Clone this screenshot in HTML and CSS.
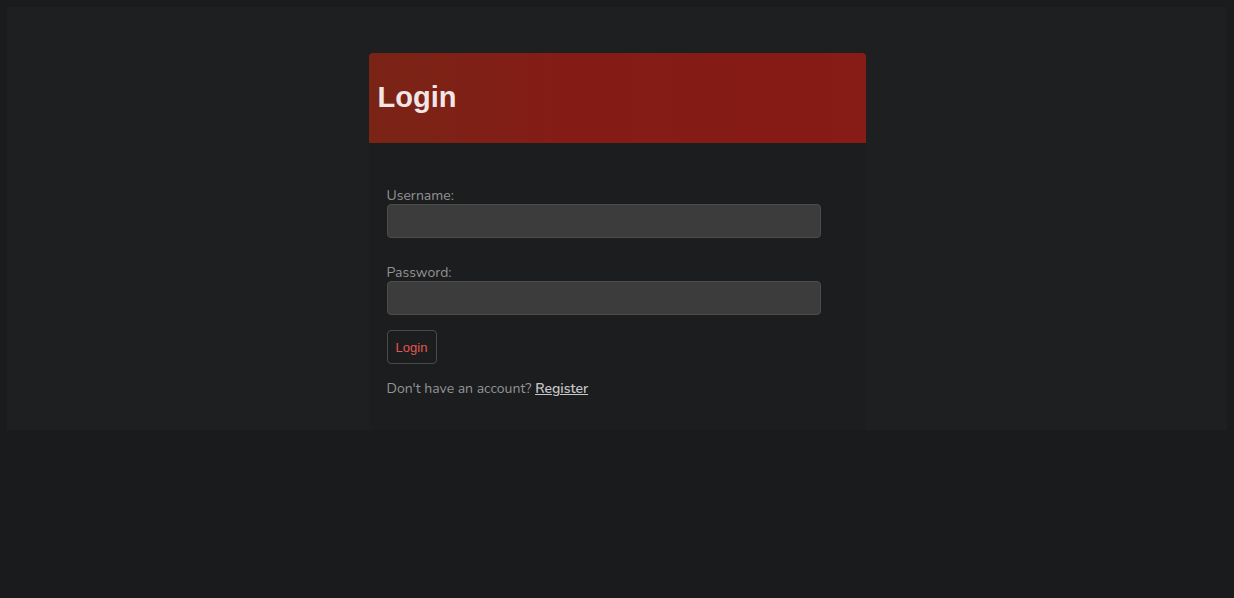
FILE: index.html
```html
<!DOCTYPE html>
<html>
<head>
<meta charset="utf-8">
<link rel="stylesheet" href="styles.css">
</head>
<body>
<div class="page">
  <div class="card">
    <div class="card-header"><h1>Login</h1></div>
    <form class="card-body">
      <div class="field">
        <label>Username:</label>
        <input type="text" class="input">
      </div>
      <div class="field">
        <label>Password:</label>
        <input type="password" class="input">
      </div>
      <button type="button" class="btn">Login</button>
      <p class="note">Don't have an account? <a href="#">Register</a></p>
    </form>
  </div>
</div>
</body>
</html>
```
FILE: styles.css
```css
html, body { margin: 0; height: 100%; }
body {
  background: #1a1b1d;
  padding: 7px;
  box-sizing: border-box;
  font-family: "Nunito", "Lato", "Open Sans", sans-serif;
}
.page {
  background: #1e1f21;
  padding-top: 46px;
  display: flex;
  justify-content: center;
  align-items: flex-start;
}
.card {
  width: 497px;
  background: #1c1d1f;
}
.card-header {
  height: 90px;
  background: linear-gradient(90deg, #7a2416 0%, #841c15 40%, #871b15 100%);
  border-radius: 4px 4px 0 0;
  display: flex;
  align-items: center;
  padding-left: 9px;
}
.card-header h1 {
  margin: 0 0 2px;
  font-family: "Liberation Sans", Arial, sans-serif;
  font-weight: bold;
  font-size: 29px;
  color: #f1e6e6;
}
.card-body {
  padding: 44px 18px 33px;
  display: flex;
  flex-direction: column;
  align-items: flex-start;
}
.field {
  display: flex;
  flex-direction: column;
  margin-bottom: 26px;
}
.field + .field { margin-bottom: 15px; }
label {
  font-size: 14px;
  color: #939393;
  line-height: 17px;
  margin-bottom: 0;
}
.input {
  width: 434px;
  height: 34px;
  box-sizing: border-box;
  background: #3c3c3c;
  border: 1px solid #4c4c4a;
  border-radius: 4px;
  margin: 0;
}
.btn {
  width: 50px;
  height: 34px;
  background: transparent;
  border: 1px solid #4a4a4a;
  border-radius: 4px;
  color: #e2574d;
  font-family: "Liberation Sans", Arial, sans-serif;
  font-size: 13px;
  padding: 0;
}
.note {
  margin: 16px 0 0;
  font-size: 14px;
  color: #939393;
  line-height: 17px;
}
.note a {
  color: #c6c6c6;
  text-decoration: underline;
  font-weight: 600;
}
```
